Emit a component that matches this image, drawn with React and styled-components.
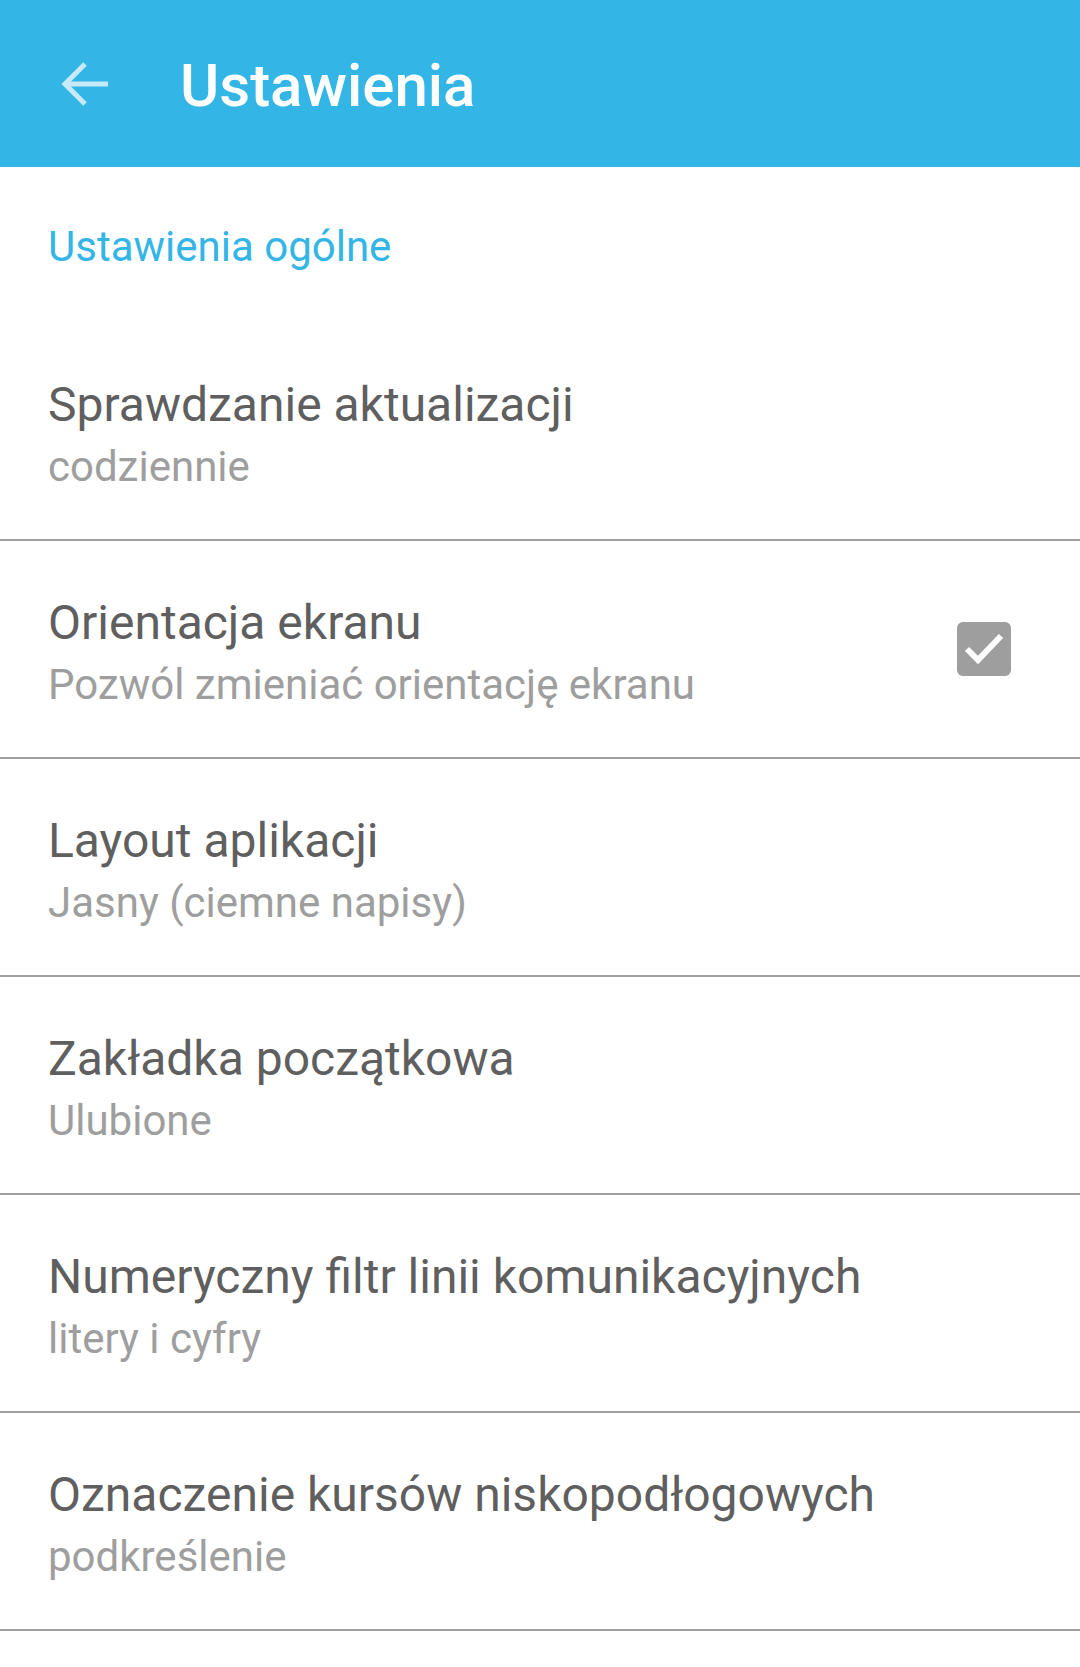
import React from "react";
import styled, { createGlobalStyle } from "styled-components";

const Global = createGlobalStyle`
  html, body { margin: 0; padding: 0; background: #ffffff; }
  body { font-family: Roboto, "Noto Sans", "Liberation Sans", sans-serif; }
  * { box-sizing: border-box; }
`;

const Page = styled.div`
  width: 1080px;
  min-height: 1667px;
  background: #ffffff;
`;

const AppBar = styled.header`
  height: 167px;
  background: #33b5e5;
  display: flex;
  align-items: center;
  padding-left: 60px;
`;

const BackButton = styled.div`
  width: 48px;
  height: 46px;
  display: flex;
  align-items: center;
  margin-right: 72px;
`;

const AppTitle = styled.h1`
  margin: 0;
  padding-top: 5px;
  font-family: Roboto, "Noto Sans", sans-serif;
  font-weight: 500;
  font-size: 60px;
  line-height: 70px;
  color: #ffffff;
`;

const SectionHeader = styled.div`
  padding: 55px 48px 51px;
  font-size: 42px;
  line-height: 50px;
  color: #33b5e5;
`;

const Row = styled.div`
  min-height: 218px;
  display: flex;
  align-items: center;
  padding: 0 69px 0 48px;
  border-bottom: 2px solid #9e9e9e;
`;

const RowText = styled.div`
  flex: 1;
  display: flex;
  flex-direction: column;
  padding-top: 6px;
`;

const RowTitle = styled.div`
  font-size: 48px;
  line-height: 62px;
  color: #5f5f5f;
`;

const RowSummary = styled.div`
  margin-top: 4px;
  font-size: 42px;
  line-height: 54px;
  color: #9e9e9e;
`;

const CheckBox = styled.div`
  width: 54px;
  height: 54px;
  border-radius: 6px;
  background: ${(p) => (p.checked ? "#9e9e9e" : "transparent")};
  display: flex;
  align-items: center;
  justify-content: center;
  flex-shrink: 0;
`;

const items = [
  { title: "Sprawdzanie aktualizacji", summary: "codziennie" },
  { title: "Orientacja ekranu", summary: "Pozwól zmieniać orientację ekranu", checkbox: true },
  { title: "Layout aplikacji", summary: "Jasny (ciemne napisy)" },
  { title: "Zakładka początkowa", summary: "Ulubione" },
  { title: "Numeryczny filtr linii komunikacyjnych", summary: "litery i cyfry" },
  { title: "Oznaczenie kursów niskopodłogowych", summary: "podkreślenie" },
];

export default function App() {
  return (
    <Page>
      <Global />
      <AppBar>
        <BackButton>
          <svg width="48" height="46" viewBox="0 0 48 46" fill="none">
            <path
              d="M5 23 H48 M25 3 L5 23 L25 43"
              stroke="rgba(255,255,255,0.72)"
              strokeWidth="5"
              strokeLinecap="butt"
              strokeLinejoin="miter"
            />
          </svg>
        </BackButton>
        <AppTitle>Ustawienia</AppTitle>
      </AppBar>
      <SectionHeader>Ustawienia ogólne</SectionHeader>
      {items.map((it) => (
        <Row key={it.title}>
          <RowText>
            <RowTitle>{it.title}</RowTitle>
            <RowSummary>{it.summary}</RowSummary>
          </RowText>
          {it.checkbox && (
            <CheckBox checked>
              <svg width="54" height="54" viewBox="0 0 54 54" fill="none">
                <path d="M10 27 L21 38 L44 14" stroke="#ffffff" strokeWidth="6" />
              </svg>
            </CheckBox>
          )}
        </Row>
      ))}
    </Page>
  );
}
